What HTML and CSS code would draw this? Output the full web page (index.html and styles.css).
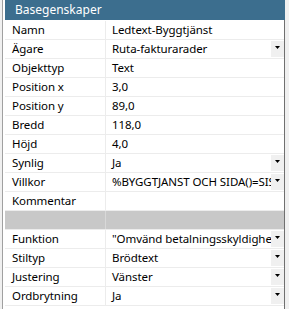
FILE: index.html
```html
<!DOCTYPE html>
<html>
<head>
  <meta charset="utf-8">
  <link rel="stylesheet" href="styles.css">
</head>
<body>

<div class="panel">
  <div class="panel-title">Basegenskaper</div>

  <div class="props">
    <div class="prop"><div class="prop-name">Namn</div><div class="prop-value"><span class="val">Ledtext-Byggtjänst</span></div></div>
    <div class="prop"><div class="prop-name">Ägare</div><div class="prop-value"><span class="val">Ruta-fakturarader</span><span class="drop"></span></div></div>
    <div class="prop"><div class="prop-name">Objekttyp</div><div class="prop-value"><span class="val">Text</span></div></div>
    <div class="prop"><div class="prop-name">Position x</div><div class="prop-value"><span class="val">3,0</span></div></div>
    <div class="prop"><div class="prop-name">Position y</div><div class="prop-value"><span class="val">89,0</span></div></div>
    <div class="prop"><div class="prop-name">Bredd</div><div class="prop-value"><span class="val">118,0</span></div></div>
    <div class="prop"><div class="prop-name">Höjd</div><div class="prop-value"><span class="val">4,0</span></div></div>
    <div class="prop"><div class="prop-name">Synlig</div><div class="prop-value"><span class="val">Ja</span><span class="drop"></span></div></div>
    <div class="prop"><div class="prop-name">Villkor</div><div class="prop-value"><span class="val">%BYGGTJANST OCH SIDA()=SISTA</span><span class="drop"></span></div></div>
    <div class="prop"><div class="prop-name">Kommentar</div><div class="prop-value"><span class="val"></span></div></div>
    <div class="prop prop-section"><div class="prop-name"></div><div class="prop-value"></div></div>
    <div class="prop"><div class="prop-name">Funktion</div><div class="prop-value"><span class="val">"Omvänd betalningsskyldighet"</span><span class="drop"></span></div></div>
    <div class="prop"><div class="prop-name">Stiltyp</div><div class="prop-value"><span class="val">Brödtext</span><span class="drop"></span></div></div>
    <div class="prop"><div class="prop-name">Justering</div><div class="prop-value"><span class="val">Vänster</span><span class="drop"></span></div></div>
    <div class="prop"><div class="prop-name">Ordbrytning</div><div class="prop-value"><span class="val">Ja</span><span class="drop"></span></div></div>
  </div>
</div>

</body>
</html>
```

FILE: styles.css
```css
body {
  margin: 0;
  background: #f0f0f0;
  font-family: "Noto Sans", "Liberation Sans", sans-serif;
  font-size: 11.5px;
  letter-spacing: -0.08px;
  color: #000;
}

.panel {
  margin-left: 2px;
  width: 283px;
  height: 309px;
  box-sizing: border-box;
  padding-left: 2px;
  background: #fff;
  border-left: 1px solid #a0a0a0;
  border-right: 1px solid #707070;
}

.panel-title {
  height: 20px;
  line-height: 19px;
  margin-right: -1px;
  padding-left: 10px;
  background: #3c6e8e;
  color: #fff;
  font-size: 12px;
  letter-spacing: 0;
}

.props {
  padding-top: 1px;
}

.prop {
  display: grid;
  grid-template-columns: 101px 1fr;
  height: 19px;
  box-sizing: border-box;
  border-bottom: 1px solid #ececec;
}

.prop-name {
  padding-left: 7px;
  line-height: 18px;
  border-right: 1px solid #ececec;
  white-space: nowrap;
}

.prop-value {
  display: flex;
  min-width: 0;
  line-height: 18px;
}

.val {
  flex: 1;
  min-width: 0;
  padding-left: 6px;
  overflow: hidden;
  white-space: nowrap;
}

.drop {
  position: relative;
  width: 13px;
  height: 16px;
  margin: 1px 0;
  background: #f0f0f0;
}

/* small black arrow */
.drop::after {
  content: "";
  position: absolute;
  top: 5px;
  left: 4px;
  width: 5px;
  height: 3px;
  background: #000;
  clip-path: polygon(0 0, 100% 0, 50% 100%);
}

.prop-section .prop-name,
.prop-section .prop-value {
  background: #c8c8c8;
}

.prop-section .prop-name {
  border-right-color: #d8d8d8;
}
```
